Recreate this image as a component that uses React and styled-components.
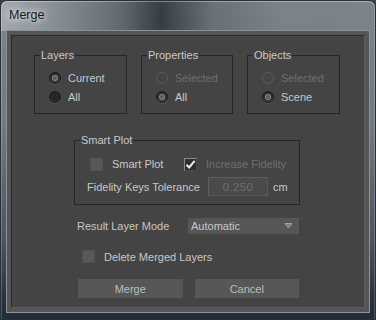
import React from "react";
import styled, { createGlobalStyle } from "styled-components";

const GlobalStyle = createGlobalStyle`
  html, body {
    margin: 0;
    padding: 0;
    background: #3b4148;
  }
  body {
    font-family: "Liberation Sans", Arial, sans-serif;
    font-size: 11px;
  }
`;

const Window = styled.div`
  width: 376px;
  height: 320px;
  box-sizing: border-box;
  display: flex;
  flex-direction: column;
  border: 1px solid #2a3037;
  border-radius: 7px 7px 0 0;
  background:
    linear-gradient(
      90deg,
      rgba(190, 196, 200, 0.6) 0px,
      rgba(150, 156, 162, 0.35) 60px,
      rgba(60, 68, 76, 0.4) 120px,
      rgba(30, 38, 46, 0.75) 160px,
      rgba(70, 78, 86, 0.35) 210px,
      rgba(120, 127, 133, 0.1) 280px,
      rgba(140, 146, 152, 0.05) 376px
    ) top / 100% 30px no-repeat,
    linear-gradient(180deg, #7c838a 0px, #737a81 120px, #4a5560 240px, #26313c 300px, #222c36 320px);
  box-shadow: inset 0 1px 0 rgba(255, 255, 255, 0.35), inset 1px 0 0 rgba(255, 255, 255, 0.2),
    inset -1px 0 0 rgba(255, 255, 255, 0.2);
  overflow: hidden;
`;

const TitleBar = styled.div`
  height: 29px;
  flex: none;
  box-sizing: border-box;
  padding: 7px 0 0 8px;
`;

const Title = styled.span`
  font-family: "Liberation Sans", Arial, sans-serif;
  font-size: 12.5px;
  line-height: 15px;
  color: #1a1a1a;
  text-shadow: 0 0 6px rgba(255, 255, 255, 0.85), 0 0 10px rgba(255, 255, 255, 0.6);
`;

const Client = styled.div`
  flex: 1;
  margin: 0 5px 6px;
  border: 1px solid #8c939a;
  padding: 4px;
  background: #555555;
  display: flex;
`;

const Content = styled.div`
  flex: 1;
  border: 1px solid;
  border-color: #2a2a2a #5e5e5e #5e5e5e #2a2a2a;
  background: #444444;
  color: #c6c6c6;
  padding-top: 13px;
  display: flex;
  flex-direction: column;
`;

const GroupRow = styled.div`
  display: flex;
  gap: 14px;
  padding-left: 22px;
`;

const Group = styled.fieldset`
  margin: 0;
  padding: 0;
  min-width: 0;
  width: ${(p) => (p.$w ? `${p.$w}px` : "auto")};
  box-sizing: border-box;
  border: 1px solid #262626;
`;

const Legend = styled.legend`
  margin-left: 5px;
  padding: 0 1px;
  line-height: 13px;
  font-size: 11px;
  color: #c8c8c8;
`;

const GroupBody = styled.div`
  display: flex;
  flex-direction: column;
  gap: ${(p) => p.$gap || 0}px;
  padding: ${(p) => p.$top}px 0 ${(p) => p.$bottom}px ${(p) => p.$left || 0}px;
`;

const OptionRow = styled.label`
  display: flex;
  align-items: center;
  gap: 7px;
  height: 19px;
  color: ${(p) => (p.$disabled ? "#6f6f6f" : "#c8c8c8")};
`;

const RadioCircle = styled.span`
  position: relative;
  width: 12px;
  height: 12px;
  flex: none;
  box-sizing: border-box;
  border-radius: 50%;
  border: 1px solid ${(p) => (p.$disabled ? "#5d5d5d" : "#1c1c1c")};
  background: ${(p) =>
    p.$disabled
      ? "#444444"
      : p.$checked
      ? "radial-gradient(circle at 50% 40%, #2b2b2b 50%, #5f5f5f 100%)"
      : "radial-gradient(circle at 50% 35%, #262626 62%, #4e4e4e 100%)"};
  box-shadow: ${(p) => (p.$disabled ? "none" : "0 1px 0 rgba(120,120,120,0.35)")};

  &::after {
    content: "";
    display: ${(p) => (p.$checked ? "block" : "none")};
    position: absolute;
    inset: 2px;
    border-radius: 50%;
    background: radial-gradient(circle at 50% 50%, #5a5a5a 0 35%, #8d8d8d 60%, #6a6a6a 100%);
  }
`;

const Column = styled.div`
  width: 226px;
  margin: 20px 0 0 62px;
  display: flex;
  flex-direction: column;
`;

const FieldRow = styled.div`
  display: flex;
  align-items: center;
  height: ${(p) => p.$h}px;
  padding-left: ${(p) => p.$indent}px;
`;

const CheckItem = styled.label`
  display: flex;
  align-items: center;
  gap: 9px;
  width: ${(p) => (p.$w ? `${p.$w}px` : "auto")};
  color: ${(p) => (p.$disabled ? "#6f6f6f" : "#c8c8c8")};
`;

const CheckBox = styled.span`
  width: 13px;
  height: 13px;
  flex: none;
  box-sizing: border-box;
  display: flex;
  align-items: center;
  justify-content: center;
  background: ${(p) => (p.$checked ? "#2f2f2f" : "#585858")};
  border: 1px solid;
  border-color: ${(p) => (p.$checked ? "#8a8a8a #4a4a4a #4a4a4a #8a8a8a" : "#505050")};
`;

const FieldLabel = styled.span`
  width: ${(p) => p.$w}px;
  flex: none;
  color: #c8c8c8;
`;

const NumberBox = styled.div`
  width: 60px;
  height: 19px;
  box-sizing: border-box;
  border: 1px solid;
  border-color: #5e5e5e #575757 #575757 #5e5e5e;
  background: #4a4a4a;
  color: #6d6d6d;
  display: flex;
  align-items: center;
  justify-content: center;
  font-size: 11.5px;
  letter-spacing: 0.3px;
`;

const Unit = styled.span`
  margin-left: 5px;
  color: #c8c8c8;
`;

const ModeRow = styled.div`
  display: flex;
  align-items: center;
  height: 16px;
  margin-top: 13px;
  padding: 0 1px 0 3px;
`;

const Select = styled.div`
  margin-left: auto;
  width: 111px;
  height: 16px;
  box-sizing: border-box;
  background: #565656;
  display: flex;
  align-items: center;
  padding: 0 6px 0 3px;
  color: #c8c8c8;

  svg {
    margin-left: auto;
  }
`;

const DeleteRow = styled.div`
  display: flex;
  align-items: center;
  height: 13px;
  margin-top: 16px;
  padding-left: 8px;
`;

const ButtonRow = styled.div`
  display: flex;
  gap: 12px;
  margin-top: 16px;
  padding: 0 1px 0 4px;
`;

const Button = styled.button`
  flex: 1;
  height: 19px;
  border: none;
  padding: 0;
  background: #575757;
  color: #bdbdbd;
  font-family: "Liberation Sans", Arial, sans-serif;
  font-size: 11px;
`;

const Radio = ({ checked, disabled, children }) => (
  <OptionRow $disabled={disabled}>
    <RadioCircle $checked={checked} $disabled={disabled} />
    {children}
  </OptionRow>
);

const Check = ({ checked, disabled, width, children }) => (
  <CheckItem $w={width} $disabled={disabled}>
    <CheckBox $checked={checked}>
      {checked && (
        <svg width="11" height="11" viewBox="0 0 11 11">
          <path d="M1.5 5.8 L4.2 8.5 L9.6 1.8" fill="none" stroke="#ececec" strokeWidth="2" />
        </svg>
      )}
    </CheckBox>
    {children}
  </CheckItem>
);

const RadioGroup = ({ title, width, options }) => (
  <Group $w={width}>
    <Legend>{title}</Legend>
    <GroupBody $top={6} $bottom={7} $left={14}>
      {options.map((o) => (
        <Radio key={o.label} checked={o.checked} disabled={o.disabled}>
          {o.label}
        </Radio>
      ))}
    </GroupBody>
  </Group>
);

export default function App() {
  return (
    <>
      <GlobalStyle />
      <Window>
        <TitleBar>
          <Title>Merge</Title>
        </TitleBar>
        <Client>
          <Content>
            <GroupRow>
              <RadioGroup
                title="Layers"
                width={93}
                options={[{ label: "Current", checked: true }, { label: "All" }]}
              />
              <RadioGroup
                title="Properties"
                width={92}
                options={[{ label: "Selected", disabled: true }, { label: "All", checked: true }]}
              />
              <RadioGroup
                title="Objects"
                width={93}
                options={[{ label: "Selected", disabled: true }, { label: "Scene", checked: true }]}
              />
            </GroupRow>

            <Column>
              <Group>
                <Legend>Smart Plot</Legend>
                <GroupBody $top={7} $bottom={8} $gap={3}>
                  <FieldRow $h={20} $indent={15}>
                    <Check width={94}>Smart Plot</Check>
                    <Check checked disabled>
                      Increase Fidelity
                    </Check>
                  </FieldRow>
                  <FieldRow $h={19} $indent={12}>
                    <FieldLabel $w={121}>Fidelity Keys Tolerance</FieldLabel>
                    <NumberBox>0.250</NumberBox>
                    <Unit>cm</Unit>
                  </FieldRow>
                </GroupBody>
              </Group>

              <ModeRow>
                <span>Result Layer Mode</span>
                <Select>
                  Automatic
                  <svg width="9" height="6" viewBox="0 0 9 6">
                    <path d="M1 0.5 H8 L4.5 5 Z" fill="#7e7e7e" stroke="#a0a0a0" strokeWidth="1" />
                  </svg>
                </Select>
              </ModeRow>

              <DeleteRow>
                <Check>Delete Merged Layers</Check>
              </DeleteRow>

              <ButtonRow>
                <Button>Merge</Button>
                <Button>Cancel</Button>
              </ButtonRow>
            </Column>
          </Content>
        </Client>
      </Window>
    </>
  );
}
